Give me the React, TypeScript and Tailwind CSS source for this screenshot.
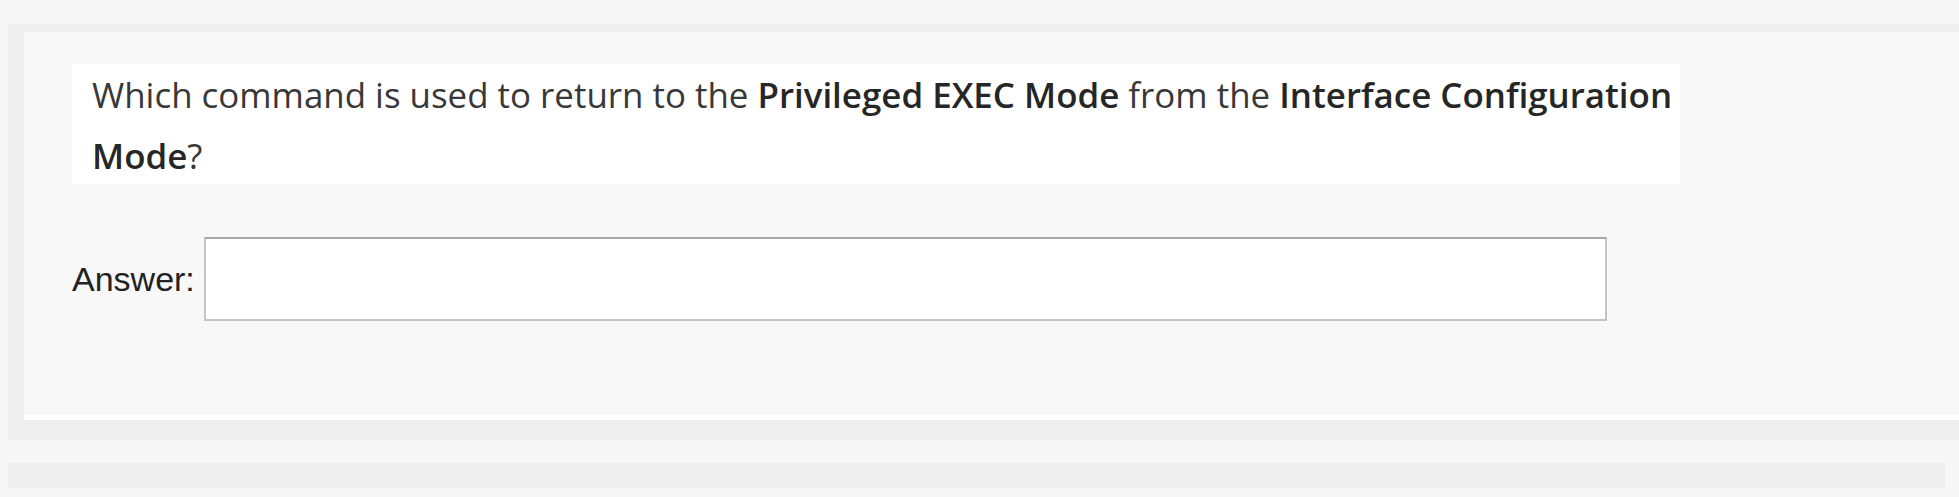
import React, { useState } from "react";

const textFont = { fontFamily: '"Open Sans", "Noto Sans", sans-serif' };

export default function App() {
  const [answer, setAnswer] = useState("");

  return (
    <div className="h-[497px] w-full overflow-hidden bg-[#f7f7f7] pt-[24px]">
      <div className="ml-[8px] bg-[#efefef] pt-[8px] pl-[16px] pb-[20px]">
        {/* question card */}
        <div className="h-[388px] border-b-[5px] border-white bg-[#f8f8f8] pt-[32px] pl-[48px]">
          <div
            className="w-[1608px] h-[120px] bg-white pl-[20px] text-[34.9px] leading-[61px] text-[#383838] whitespace-nowrap"
            style={textFont}
          >
            Which command is used to return to the{" "}
            <span className="font-semibold text-[#262626]">Privileged EXEC Mode</span> from the{" "}
            <span className="font-semibold text-[#262626]">Interface Configuration</span>
            <br />
            <span className="font-semibold text-[#262626]">Mode</span>?
          </div>

          <div className="mt-[53px] flex items-center">
            <label
              htmlFor="answer"
              className="text-[34px] text-[#222]"
              style={{ fontFamily: '"Liberation Sans", Arial, sans-serif' }}
            >
              Answer:
            </label>
            <input
              id="answer"
              type="text"
              value={answer}
              onChange={(e) => setAnswer(e.target.value)}
              className="ml-[9px] w-[1403px] h-[84px] bg-white border-2 border-[#c4c4c4] border-t-[#a8a8a8] px-3 text-[30px] outline-none"
            />
          </div>
        </div>
      </div>
      <div className="h-[23px]" />
      <div className="ml-[8px] mr-[14px] h-[25px] bg-[#efefef]" />
    </div>
  );
}
